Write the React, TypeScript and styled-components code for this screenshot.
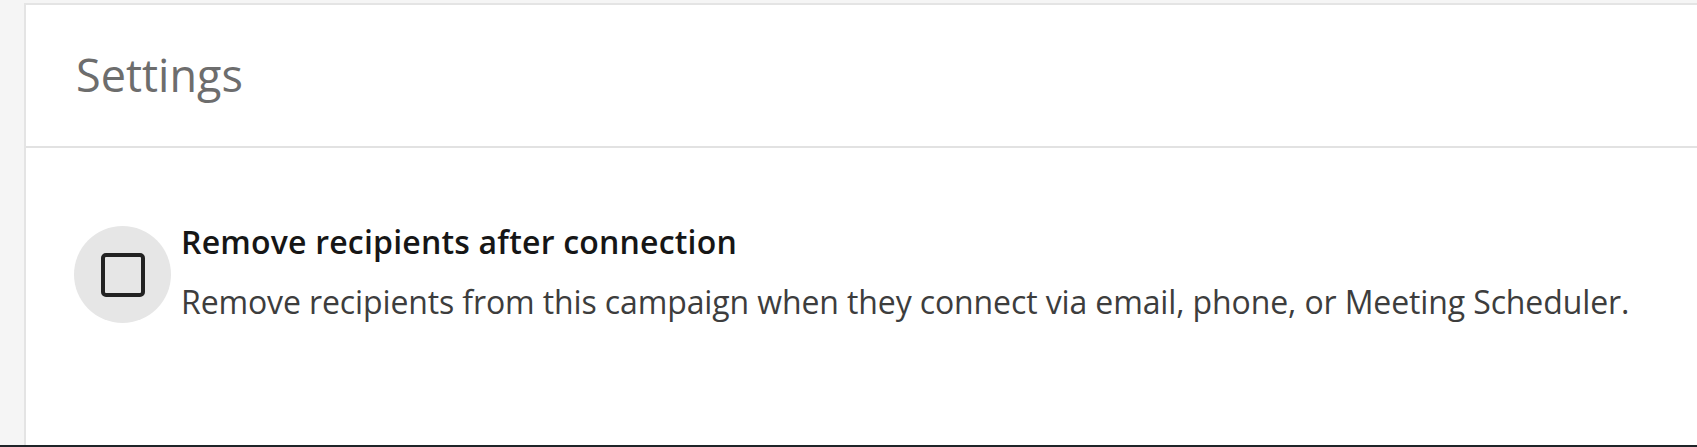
import React, { useState } from "react";
import styled, { createGlobalStyle } from "styled-components";

const GlobalStyle = createGlobalStyle`
  html, body {
    margin: 0;
    padding: 0;
    background: #f5f5f5;
    font-family: "Open Sans", "Liberation Sans", sans-serif;
  }
`;

const App = () => {
  const [checked, setChecked] = useState(false);

  return (
    <StyledPage>
      <GlobalStyle />
      <StyledCard>
        <StyledCardHeader>
          <h2>Settings</h2>
        </StyledCardHeader>
        <StyledCardBody>
          <StyledOption>
            <StyledCheckHalo
              type="button"
              role="checkbox"
              aria-checked={checked}
              onClick={() => setChecked(!checked)}
            >
              <StyledCheckBox $checked={checked} />
            </StyledCheckHalo>
            <StyledOptionText>
              <h3>Remove recipients after connection</h3>
              <p>
                Remove recipients from this campaign when they connect via
                email, phone, or Meeting Scheduler.
              </p>
            </StyledOptionText>
          </StyledOption>
        </StyledCardBody>
      </StyledCard>
      <StyledBottomEdge />
    </StyledPage>
  );
};

const StyledPage = styled.div`
  height: 447px;
  display: flex;
  flex-direction: column;
  overflow: hidden;
  padding-top: 3px;
  box-sizing: border-box;
`;

const StyledCard = styled.section`
  flex: 1;
  margin-left: 24px;
  margin-right: -4px;
  background: #ffffff;
  border: 2px solid #e4e4e4;
  border-bottom: none;
  display: flex;
  flex-direction: column;
`;

const StyledCardHeader = styled.header`
  height: 141px;
  padding-left: 50px;
  display: flex;
  align-items: center;
  border-bottom: 2px solid #e2e2e2;

  > h2 {
    margin: 0 0 2px 0;
    font-size: 45px;
    font-weight: 400;
    color: #6d6d6d;
  }
`;

const StyledCardBody = styled.div`
  flex: 1;
  padding: 74px 0 0 48px;
`;

const StyledOption = styled.div`
  display: flex;
  align-items: flex-start;
  gap: 10px;
`;

const StyledCheckHalo = styled.button`
  width: 97px;
  height: 97px;
  margin-top: 4px;
  flex: none;
  border: none;
  padding: 0;
  border-radius: 50%;
  background: #e6e6e6;
  display: flex;
  align-items: center;
  justify-content: center;
  cursor: pointer;
`;

const StyledCheckBox = styled.span<{ $checked: boolean }>`
  width: 44px;
  height: 44px;
  box-sizing: border-box;
  border: 4.5px solid #222222;
  border-radius: 5px;
  background: ${(p) => (p.$checked ? "#222222" : "transparent")};
`;

const StyledOptionText = styled.div`
  > h3 {
    margin: 0 0 20px 0;
    font-size: 32px;
    line-height: 40px;
    font-weight: 600;
    letter-spacing: 0.2px;
    color: #161616;
  }

  > p {
    margin: 0;
    font-size: 32px;
    line-height: 40px;
    letter-spacing: -0.12px;
    color: #3d3d3d;
  }
`;

const StyledBottomEdge = styled.div`
  height: 2px;
  flex: none;
  background: #1f2428;
`;

export default App;
